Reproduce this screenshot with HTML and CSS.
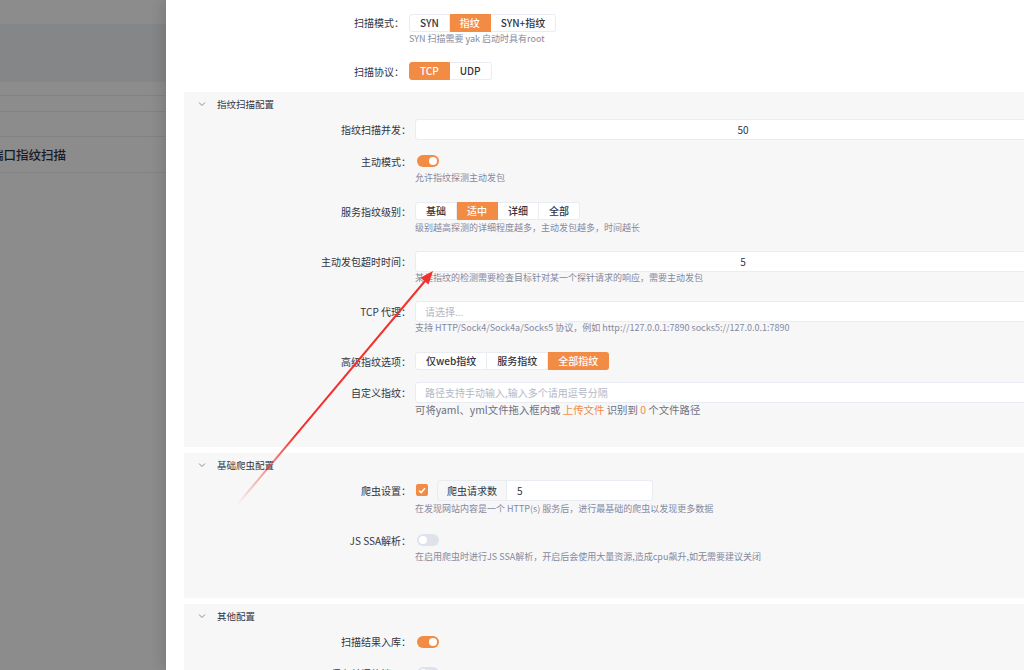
FILE: index.html
```html
<!DOCTYPE html>
<html>
<head>
    <meta charset="utf-8">
    <title>端口指纹扫描</title>
    <link rel="stylesheet" href="styles.css">
</head>
<body>
<div class="app">
    <div class="bg-page">
        <div class="bg-top"></div>
        <div class="bg-band"></div>
        <div class="bg-row bg-row-a"></div>
        <div class="bg-row bg-row-b"></div>
        <div class="bg-row bg-row-c"></div>
        <div class="bg-row bg-row-title">端口指纹扫描</div>
    </div>
    <div class="mask"></div>

    <div class="drawer">
        <div class="drawer-body">
            <div class="form-item top">
                <label>扫描模式</label>
                <div class="control">
                    <div class="radio-group">
                        <span class="radio-btn">SYN</span>
                        <span class="radio-btn active">指纹</span>
                        <span class="radio-btn">SYN+指纹</span>
                    </div>
                </div>
                <div class="help top-help">SYN 扫描需要 yak 启动时具有root</div>
            </div>
            <div class="form-item top">
                <label>扫描协议</label>
                <div class="control">
                    <div class="radio-group">
                        <span class="radio-btn active">TCP</span>
                        <span class="radio-btn">UDP</span>
                    </div>
                </div>
            </div>

            <div class="section">
                <div class="section-head">
                    <svg class="chevron" width="8" height="6" viewBox="0 0 8 6"><path d="M1 1.5 L4 4.5 L7 1.5" fill="none" stroke="#8a8d99" stroke-width="1"/></svg>
                    <span>指纹扫描配置</span>
                </div>
                <div class="form-item">
                    <label>指纹扫描并发</label>
                    <div class="control"><div class="input center">50</div></div>
                </div>
                <div class="form-item">
                    <label>主动模式</label>
                    <div class="control"><span class="switch on"></span></div>
                    <div class="help">允许指纹探测主动发包</div>
                </div>
                <div class="form-item">
                    <label>服务指纹级别</label>
                    <div class="control">
                        <div class="radio-group">
                            <span class="radio-btn">基础</span>
                            <span class="radio-btn active">适中</span>
                            <span class="radio-btn">详细</span>
                            <span class="radio-btn">全部</span>
                        </div>
                    </div>
                    <div class="help">级别越高探测的详细程度越多，主动发包越多，时间越长</div>
                </div>
                <div class="form-item">
                    <label>主动发包超时时间</label>
                    <div class="control"><div class="input center">5</div></div>
                    <div class="help">某类指纹的检测需要检查目标针对某一个探针请求的响应，需要主动发包</div>
                </div>
                <div class="form-item">
                    <label>TCP 代理</label>
                    <div class="control"><div class="input placeholder">请选择...</div></div>
                    <div class="help">支持 HTTP/Sock4/Sock4a/Socks5 协议，例如 http://127.0.0.1:7890 socks5://127.0.0.1:7890</div>
                </div>
                <div class="form-item">
                    <label>高级指纹选项</label>
                    <div class="control">
                        <div class="radio-group">
                            <span class="radio-btn">仅web指纹</span>
                            <span class="radio-btn">服务指纹</span>
                            <span class="radio-btn active">全部指纹</span>
                        </div>
                    </div>
                </div>
                <div class="form-item">
                    <label>自定义指纹</label>
                    <div class="control"><div class="input placeholder">路径支持手动输入,输入多个请用逗号分隔</div></div>
                    <div class="extra">可将yaml、yml文件拖入框内或 <span class="link">上传文件</span> 识别到 <span class="link">0</span> 个文件路径</div>
                </div>
            </div>

            <div class="section section-crawler">
                <div class="section-head">
                    <svg class="chevron" width="8" height="6" viewBox="0 0 8 6"><path d="M1 1.5 L4 4.5 L7 1.5" fill="none" stroke="#8a8d99" stroke-width="1"/></svg>
                    <span>基础爬虫配置</span>
                </div>
                <div class="form-item">
                    <label>爬虫设置</label>
                    <div class="control">
                        <span class="checkbox">
                            <svg width="8" height="7" viewBox="0 0 8 7"><path d="M1 3.6 L3.1 5.6 L7 1.3" fill="none" stroke="#fff" stroke-width="1.5"/></svg>
                        </span>
                        <div class="addon-group">
                            <span class="addon">爬虫请求数</span>
                            <span class="addon-input">5</span>
                        </div>
                    </div>
                    <div class="help help-low">在发现网站内容是一个 HTTP(s) 服务后，进行最基础的爬虫以发现更多数据</div>
                </div>
                <div class="form-item">
                    <label>JS SSA解析</label>
                    <div class="control"><span class="switch"></span></div>
                    <div class="help">在启用爬虫时进行JS SSA解析，开启后会使用大量资源,造成cpu飙升,如无需要建议关闭</div>
                </div>
            </div>

            <div class="section">
                <div class="section-head">
                    <svg class="chevron" width="8" height="6" viewBox="0 0 8 6"><path d="M1 1.5 L4 4.5 L7 1.5" fill="none" stroke="#8a8d99" stroke-width="1"/></svg>
                    <span>其他配置</span>
                </div>
                <div class="form-item">
                    <label>扫描结果入库</label>
                    <div class="control"><span class="switch on"></span></div>
                </div>
                <div class="form-item">
                    <label>保存关闭的端口</label>
                    <div class="control"><span class="switch"></span></div>
                </div>
            </div>
        </div>
    </div>

    <!-- annotation arrow drawn over the screenshot -->
    <svg class="annotation" width="1024" height="670" viewBox="0 0 1024 670">
        <defs>
            <linearGradient id="arrowFade" gradientUnits="userSpaceOnUse" x1="237" y1="505" x2="433" y2="271">
                <stop offset="0" stop-color="#f3302b" stop-opacity="0"/>
                <stop offset="0.3" stop-color="#f3302b" stop-opacity="1"/>
                <stop offset="1" stop-color="#f3302b" stop-opacity="1"/>
            </linearGradient>
        </defs>
        <line x1="237" y1="505" x2="425" y2="281" stroke="url(#arrowFade)" stroke-width="2"/>
        <polygon points="433,271 428.5,284.5 420.5,277.7" fill="#f3302b"/>
    </svg>
</div>
</body>
</html>
```

FILE: styles.css
```css
body {
    margin: 0;
    font-family: "Noto Sans CJK SC", "Noto Sans", sans-serif;
    color: #31343f;
}
.app {
    position: relative;
    width: 1024px;
    height: 670px;
    overflow: hidden;
    background: #fff;
}

/* page behind the drawer */
.bg-page {
    width: 166px;
}
.bg-top { height: 24px; }
.bg-band {
    height: 58px;
    background: #f3f4f6;
}
.bg-row {
    border-bottom: 1px solid #eceef2;
}
.bg-row-a { height: 13px; }
.bg-row-b { height: 15px; }
.bg-row-c { height: 24px; }
.bg-row-title {
    height: 35px;
    line-height: 35px;
    margin-left: -9px;
    font-size: 12.5px;
    font-weight: 500;
    color: #31343f;
}
.mask {
    position: absolute;
    inset: 0;
    background: rgba(0, 0, 0, 0.45);
}

/* drawer */
.drawer {
    position: absolute;
    top: 0;
    left: 166px;
    right: 0;
    bottom: 0;
    background: #fff;
    overflow: hidden;
    box-shadow: -4px 0 12px rgba(0, 0, 0, 0.12);
}
.drawer-body {
    width: 1000px;
    padding: 12px 0 0 18px;
}

.form-item {
    display: grid;
    grid-template-columns: 227px 1fr;
    column-gap: 4px;
    margin-bottom: 10.5px;
}
.form-item.top {
    grid-template-columns: 220px 1fr;
    column-gap: 5px;
}
.form-item label {
    grid-column: 1;
    height: 21px;
    line-height: 21px;
    font-size: 10px;
    text-align: right;
    white-space: nowrap;
}
.form-item label::after {
    content: "：";
}
.control {
    grid-column: 2;
    height: 21px;
    display: flex;
    align-items: center;
}
.help {
    grid-column: 2;
    font-size: 9px;
    line-height: 11px;
    color: #85899e;
    margin-bottom: 7.5px;
    white-space: nowrap;
}
.top-help { margin-bottom: 6px; }
.help-low {
    margin-top: 2px;
    margin-bottom: 5.5px;
}
.extra {
    grid-column: 2;
    font-size: 10.4px;
    line-height: 13px;
    color: #6f7280;
    margin-bottom: 5.5px;
    white-space: nowrap;
}
.link { color: #f28b44; }

/* radio buttons */
.radio-group {
    display: flex;
    height: 18px;
}
.radio-btn {
    padding: 0 10px;
    height: 16px;
    line-height: 16px;
    font-size: 10px;
    font-weight: 500;
    background: #fff;
    border: 1px solid #eaecf3;
    border-left-width: 0;
    white-space: nowrap;
}
.radio-btn:first-child {
    border-left-width: 1px;
    border-radius: 3px 0 0 3px;
}
.radio-btn:last-child { border-radius: 0 3px 3px 0; }
.radio-btn.active {
    background: #f28b44;
    border-color: #f28b44;
    color: #fff;
}

/* inputs */
.input {
    box-sizing: border-box;
    width: 656px;
    height: 21px;
    line-height: 19px;
    padding: 0 9px;
    font-size: 10px;
    background: #fff;
    border: 1px solid #eaecf3;
    border-radius: 3px;
}
.input.center { text-align: center; }
.input.placeholder { color: #b4b7c5; }

.switch {
    position: relative;
    width: 22px;
    height: 12px;
    margin-left: 2px;
    border-radius: 6px;
    background: #dfe2ea;
}
.switch::after {
    content: "";
    position: absolute;
    top: 2px;
    left: 2px;
    width: 8px;
    height: 8px;
    border-radius: 50%;
    background: #fff;
}
.switch.on { background: #f28b44; }
.switch.on::after { left: 12px; }

.checkbox {
    width: 12px;
    height: 12px;
    margin-left: 1px;
    border-radius: 2px;
    background: #f28b44;
    display: flex;
    align-items: center;
    justify-content: center;
}
.addon-group {
    display: flex;
    height: 21px;
    margin-left: 9px;
}
.addon {
    box-sizing: border-box;
    width: 70px;
    line-height: 19px;
    text-align: center;
    font-size: 10px;
    background: #f7f7f8;
    border: 1px solid #eaecf3;
    border-radius: 3px 0 0 3px;
}
.addon-input {
    box-sizing: border-box;
    width: 146px;
    line-height: 19px;
    padding-left: 10px;
    font-size: 10px;
    background: #fff;
    border: 1px solid #eaecf3;
    border-left: none;
    border-radius: 0 3px 3px 0;
}

/* collapsible sections */
.section {
    background: #f7f7f8;
    margin-bottom: 6px;
    padding-bottom: 14.5px;
}
.section-crawler { padding-bottom: 18.5px; }
.section-head {
    height: 24px;
    display: flex;
    align-items: center;
    margin-bottom: 3px;
    font-size: 9.5px;
}
.chevron {
    margin: 0 11px 0 14px;
}

.annotation {
    position: absolute;
    top: 0;
    left: 0;
    pointer-events: none;
}
```
